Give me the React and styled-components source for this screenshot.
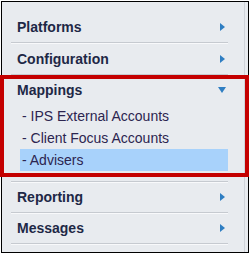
import styled, { createGlobalStyle } from "styled-components";

const Global = createGlobalStyle`
  body {
    margin: 0;
    background: #ffffff;
    font-family: "Liberation Sans", Arial, sans-serif;
  }
`;

const Frame = styled.div`
  box-sizing: border-box;
  margin: 1px 0 0 1px;
  width: 248px;
  height: 252px;
  border: 1px solid #000;
  background: #e8ebef;
`;

const Panel = styled.div`
  box-sizing: border-box;
  width: 243px;
  height: 100%;
  padding: 9px 16px 0 9px;
  border-right: 1px solid #cfd3d9;
`;

const Section = styled.div`
  position: relative;
  border-bottom: 1px solid #c6cad0;
  box-shadow: 0 1px 0 #f8f9fb;
`;

const Header = styled.div`
  display: flex;
  align-items: center;
  justify-content: space-between;
  height: ${(p) => p.$h || 31}px;
  padding: 0 2px 0 6px;
  font-size: 14px;
  font-weight: bold;
  color: #1e2846;
`;

const Arrow = styled.span`
  width: 0;
  height: 0;
  ${(p) =>
    p.$open
      ? `
    border-left: 4.5px solid transparent;
    border-right: 4.5px solid transparent;
    border-top: 6px solid #2f7ec2;
    margin: 0 0 0 0;
  `
      : `
    border-top: 4px solid transparent;
    border-bottom: 4px solid transparent;
    border-left: 5px solid #2f7ec2;
    margin-right: 1px;
  `}
`;

const SubList = styled.div`
  display: flex;
  flex-direction: column;
  margin: 0 0 10px 9px;
`;

const SubItem = styled.div`
  height: 22px;
  line-height: 22px;
  padding-left: 2px;
  font-size: 14px;
  color: #2c2550;
  background: ${(p) => (p.$active ? "#a8d2fb" : "transparent")};
`;

const Callout = styled.div`
  position: absolute;
  left: -11px;
  right: -21px;
  top: 0;
  bottom: 4px;
  border: 4px solid #c40000;
  pointer-events: none;
`;

const items = ["Platforms", "Configuration"];
const after = ["Reporting", "Messages"];
const subs = ["IPS External Accounts", "Client Focus Accounts", "Advisers"];

export default function App() {
  return (
    <>
      <Global />
      <Frame>
        <Panel>
          {items.map((t) => (
            <Section key={t}>
              <Header>
                {t}
                <Arrow />
              </Header>
            </Section>
          ))}
          <Section>
            <Header $h={30}>
              Mappings
              <Arrow $open />
            </Header>
            <SubList>
              {subs.map((s) => (
                <SubItem key={s} $active={s === "Advisers"}>
                  - {s}
                </SubItem>
              ))}
            </SubList>
            <Callout />
          </Section>
          {after.map((t) => (
            <Section key={t}>
              <Header $h={30}>
                {t}
                <Arrow />
              </Header>
            </Section>
          ))}
        </Panel>
      </Frame>
    </>
  );
}
